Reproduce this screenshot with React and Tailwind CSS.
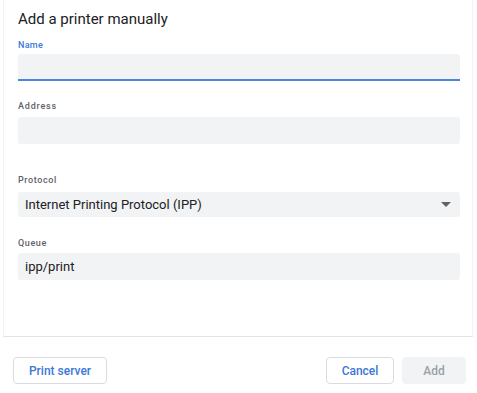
import React from "react";

export default function App() {
  return (
    <div className="w-[477px] h-[393px] bg-white overflow-hidden relative" style={{ fontFamily: "Roboto, 'Liberation Sans', sans-serif" }}>
      <div className="h-[337px] border-b border-[#e3e3e3] border-x border-x-[#f3f3f3] ml-[3px] mr-[4px]">
        <div className="pl-[14px] pr-[12px]">
          <div className="pt-[9px] text-[15px] leading-[20px] text-[#202124]">Add a printer manually</div>
          <div className="mt-[11px] text-[9px] leading-[10px] font-medium text-[#3c78d8] tracking-[0.3px]">Name</div>
          <div className="mt-[4px] h-[27px] bg-[#f1f3f4] rounded-t-[3px] border-b-2 border-[#4a86e0]"></div>
          <div className="mt-[20px] text-[9px] leading-[10px] font-medium text-[#5f6368] tracking-[0.8px]">Address</div>
          <div className="mt-[6px] h-[27px] bg-[#f1f3f4] rounded-[3px]"></div>
          <div className="mt-[31px] text-[9px] leading-[10px] font-medium text-[#5f6368] tracking-[0.6px]">Protocol</div>
          <div className="mt-[7px] h-[25px] bg-[#f1f3f4] rounded-[3px] flex items-center justify-between pl-[7px] pr-[9px]">
            <span className="text-[13px] text-[#202124]">Internet Printing Protocol (IPP)</span>
            <svg width="10" height="6" viewBox="0 0 10 6"><path d="M0 0 L10 0 L5 5 Z" fill="#5f6368" /></svg>
          </div>
          <div className="mt-[21px] text-[9px] leading-[10px] font-medium text-[#5f6368] tracking-[0.6px]">Queue</div>
          <div className="mt-[5px] h-[27px] bg-[#f1f3f4] rounded-[3px] flex items-center pl-[7px]">
            <span className="text-[13px] text-[#202124]">ipp/print</span>
          </div>
        </div>
      </div>
      <div className="flex items-center justify-between pl-[13px] pr-[11px] pt-[20px]">
        <button className="h-[27px] w-[94px] rounded-[4px] border border-[#dadce0] bg-white text-[12px] font-medium text-[#3c78d8]">Print server</button>
        <div className="flex gap-[8px]">
          <button className="h-[27px] w-[68px] rounded-[4px] border border-[#dadce0] bg-white text-[12px] font-medium text-[#3c78d8]">Cancel</button>
          <button className="h-[27px] w-[64px] rounded-[4px] bg-[#f1f3f4] text-[12px] font-medium text-[#9aa0a6]">Add</button>
        </div>
      </div>
    </div>
  );
}
